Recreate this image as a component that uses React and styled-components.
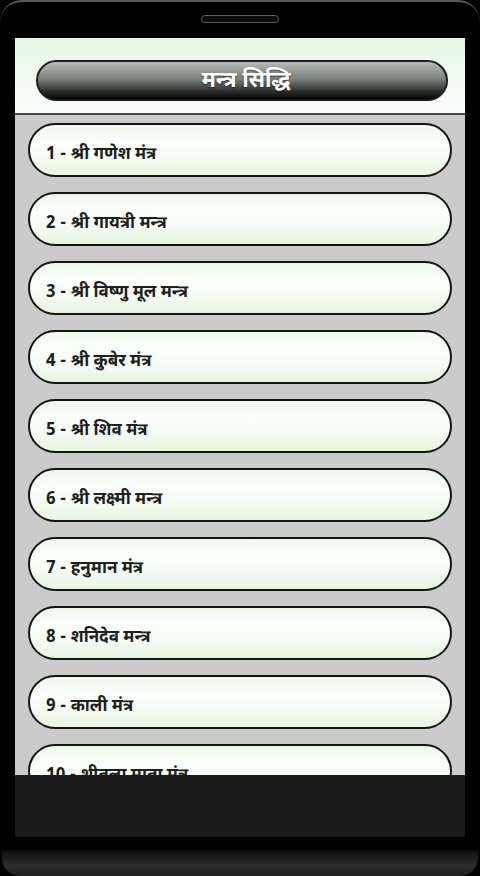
import React from "react";
import styled, { createGlobalStyle } from "styled-components";

const GlobalStyle = createGlobalStyle`
  html, body {
    margin: 0;
    padding: 0;
    background: #000;
  }
  body {
    font-family: "Noto Sans Devanagari", "Noto Sans", "Roboto", sans-serif;
  }
`;

const Device = styled.div`
  width: 480px;
  height: 876px;
  box-sizing: border-box;
  display: flex;
  flex-direction: column;
  background: #000;
  border-top: 2px solid #5a5a5a;
  border-radius: 22px 22px 0 0;
  overflow: hidden;
`;

const TopBezel = styled.div`
  height: 36px;
  display: flex;
  align-items: center;
  justify-content: center;
  padding-bottom: 2px;
  box-sizing: border-box;
`;

const Speaker = styled.div`
  width: 76px;
  height: 6px;
  border: 1px solid #5c5c5c;
  border-radius: 4px;
  background: #0a0a0a;
`;

const Screen = styled.div`
  margin: 0 15px;
  height: 799px;
  display: flex;
  flex-direction: column;
  overflow: hidden;
`;

const Header = styled.div`
  height: 77px;
  flex-shrink: 0;
  box-sizing: border-box;
  padding: 22px 17px 0 21px;
  background: linear-gradient(#e4f7e2, #fbfdfb);
  border-bottom: 2px solid #474747;
`;

const TitlePill = styled.div`
  height: 41px;
  box-sizing: border-box;
  border: 2px solid #1c1c1c;
  border-radius: 21px;
  background: linear-gradient(#b4bcb4 0%, #7d837d 45%, #2a2c2a 80%, #050505 100%);
  display: flex;
  align-items: center;
  justify-content: center;
  color: #fff;
  font-size: 22px;
  font-weight: 700;
  text-shadow: 0 1px 2px rgba(0, 0, 0, 0.6);
  padding: 2px 0 0 8px;
`;

const List = styled.div`
  flex: 1;
  min-height: 0;
  overflow: hidden;
  background: #cbcbcb;
  padding: 8px 13px 0;
  display: flex;
  flex-direction: column;
  gap: 15px;
`;

const Item = styled.div`
  flex-shrink: 0;
  height: 54px;
  box-sizing: border-box;
  border: 2px solid #141414;
  border-radius: 27px;
  background: linear-gradient(#eef9ec 0%, #fbfffb 35%, #f4fcf2 65%, #e6f6e0 100%);
  display: flex;
  align-items: center;
  padding: 10px 0 0 16px;
  color: #1e1e1e;
  font-size: 17px;
  font-weight: 700;
`;

const NavBar = styled.div`
  height: 62px;
  flex-shrink: 0;
  background: #1b1b1b;
`;

const BottomBezel = styled.div`
  flex: 1;
  display: flex;
  flex-direction: column;
  justify-content: flex-end;
`;

const Chin = styled.div`
  height: 26px;
  margin: 0 2px;
  border-radius: 0 0 18px 18px;
  background: linear-gradient(#0c0c0c, #2c2c2c 60%, #1e1e1e);
`;

const mantras = [
  "1 - श्री गणेश मंत्र",
  "2 - श्री गायत्री मन्त्र",
  "3 - श्री विष्णु मूल मन्त्र",
  "4 - श्री कुबेर मंत्र",
  "5 - श्री शिव मंत्र",
  "6 - श्री लक्ष्मी मन्त्र",
  "7 - हनुमान मंत्र",
  "8 - शनिदेव मन्त्र",
  "9 - काली मंत्र",
  "10 - शीतला माता मंत्र",
];

export default function App() {
  return (
    <>
      <GlobalStyle />
      <Device>
        <TopBezel>
          <Speaker />
        </TopBezel>
        <Screen>
          <Header>
            <TitlePill>मन्त्र सिद्धि</TitlePill>
          </Header>
          <List>
            {mantras.map((m) => (
              <Item key={m}>{m}</Item>
            ))}
          </List>
          <NavBar />
        </Screen>
        <BottomBezel>
          <Chin />
        </BottomBezel>
      </Device>
    </>
  );
}
